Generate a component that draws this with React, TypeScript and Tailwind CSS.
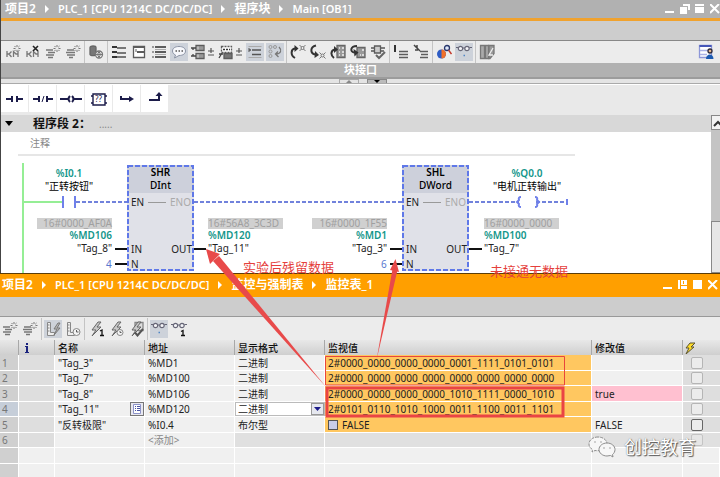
import type {ReactNode} from "react";
import clsx from "clsx";

// -------------------- data --------------------
type WatchRow = {
    name: string;
    address: string;
    format: string;
    value: string;
    modify?: string;
};

const watchRows: WatchRow[] = [
    {name: '"Tag_3"', address: "%MD1", format: "二进制", value: "2#0000_0000_0000_0000_0001_1111_0101_0101"},
    {name: '"Tag_7"', address: "%MD100", format: "二进制", value: "2#0000_0000_0000_0000_0000_0000_0000_0000"},
    {name: '"Tag_8"', address: "%MD106", format: "二进制", value: "2#0000_0000_0000_0000_1010_1111_0000_1010", modify: "true"},
    {name: '"Tag_11"', address: "%MD120", format: "二进制", value: "2#0101_0110_1010_1000_0011_1100_0011_1101"},
    {name: '"反转极限"', address: "%I0.4", format: "布尔型", value: "FALSE", modify: "FALSE"},
];

// -------------------- icons --------------------
function Icon({children}: { children: ReactNode }) {
    return (
        <svg className="w-4 h-4 shrink-0" viewBox="0 0 16 16" fill="none" stroke="#5c5c5c" strokeWidth="1.3">
            {children}
        </svg>
    );
}

const Spark = () => (
    <path d="M12 1v2M12 6v2M8.5 4.5h2M13.5 4.5h2M9.5 2l1.2 1.2M14.5 2l-1.2 1.2M9.5 7l1.2-1.2M14.5 7l-1.2-1.2" stroke="#777" strokeWidth="1"/>
);

const Network = () => (
    <path d="M2 7v6M2 10h2l2.500-2.500M4 10l2.500 3M13 7v6M13 10h-2L8.500 7.500v5.500" stroke="#777" strokeWidth="1.300"/>
);

const InsertNetworkIcon = () => <Icon><Network/><Spark/></Icon>;

const DeleteNetworkIcon = () => (
    <Icon><Network/><path d="M8 2l5 5M13 2L8 7" stroke="#222" strokeWidth="1.6"/></Icon>
);

const InsertRowIcon = () => (
    <Icon><path d="M1 6h7M3 8.500h7M1 11h8M3 13.500h5" stroke="#777" strokeWidth="1.4"/><Spark/></Icon>
);

const AddRowIcon = () => (
    <Icon><path d="M2 6h7M1 8.500h9M2 11h8M4 13.500h4" stroke="#777" strokeWidth="1.4"/><Spark/></Icon>
);

const DatabaseIcon = () => (
    <Icon>
        <path d="M2 3.500c0-2 6-2 6 0v7c0 1.500-6 1.500-6 0z" fill="#777" stroke="#666"/>
        <circle cx="11" cy="10.500" r="3.500" fill="#eee" stroke="#777"/>
        <path d="M8 10.500h6M11 7.500l1.500 3-1.500 3-1.500-3z" stroke="#777" strokeWidth="1"/>
    </Icon>
);

const OpenAllIcon = () => (
    <Icon><path d="M1 3h5M1 8h5M1 13h5" stroke="#333" strokeWidth="2"/><path d="M6 4h9M6 9h9M6 13h9" stroke="#777" strokeWidth="2"/></Icon>
);

const WindowIcon = () => (
    <Icon><path d="M2.500 2.500h11v11h-11z" fill="#fff"/><path d="M2 3h12M6 8h8" strokeWidth="2"/><path d="M5 5v3" strokeWidth="1"/></Icon>
);

const ListIcon = () => (
    <Icon>
        <path d="M4 3h11M4 8h11M4 13h11" strokeWidth="2"/>
        <path d="M1 3h2M1 8h2M1 13h2" stroke="#999" strokeWidth="2"/>
        <path d="M4 5.500h11M4 10.500h11" stroke="#aaa" strokeWidth="1"/>
    </Icon>
);

const CommentIcon = () => (
    <Icon>
        <path d="M8 2.500c4 0 6.500 1.800 6.500 4.500S12 11.500 8 11.500L3.500 14l1-3C2.500 10 1.500 8.800 1.500 7 1.500 4.300 4 2.500 8 2.500z" fill="#f6f7fb" stroke="#8b93a5" strokeWidth="1"/>
        <path d="M4.500 7h1.500M7.500 7H9M10.500 7H12" stroke="#555" strokeWidth="1.500"/>
    </Icon>
);

const OperandIcon = () => (
    <Icon>
        <path d="M6 1.500h8v5H6zM6 9.500h8v5H6z" fill="#bbb"/>
        <path d="M1 4h5M1 12h5M3 4v2M3 10v2" stroke="#444"/>
        <path d="M9 3h4M9 5h4M9 11h4M9 13h4" stroke="#777" strokeWidth="1"/>
    </Icon>
);

const TagInfoIcon = () => (
    <Icon>
        <path d="M3.500 2.500h10v6h-10z" fill="#fff" strokeDasharray="2 1"/>
        <path d="M5 5.500h7" stroke="#333" strokeWidth="1.500" strokeDasharray="2 1"/>
        <path d="M6 9.500h8v5H6z" fill="#777"/>
        <path d="M1 14l3-5M1 10h4" stroke="#444"/>
    </Icon>
);

const FavoritesIcon = () => (
    <Icon>
        <path d="M1.500 2.500h13M1.500 13.500h13" stroke="#aaa" strokeWidth="1"/>
        <path d="M2 6h2M5 6h9M5 10.500h9" stroke="#555"/>
        <path d="M2 4v4" stroke="#555" strokeWidth="1"/>
    </Icon>
);

const AbsoluteIcon = () => (
    <Icon>
        <g stroke="#999" strokeWidth="1">
            <circle cx="3.500" cy="3" r="1.500"/><circle cx="3.500" cy="7.500" r="1.500"/>
            <circle cx="3.500" cy="12" r="1.500"/><circle cx="8" cy="3" r="1.500"/>
        </g>
        <path d="M12 3c3 3 2 7-3 7M11 7.500L8.500 10l3 3" stroke="#777"/>
    </Icon>
);

const Target = ({y}: { y: number }) => (
    <g stroke="#777" strokeWidth="1">
        <circle cx="12.500" cy={y} r="1.500" fill="#eee"/>
        <path d={`M9.500 ${y - 3}l2 2M13.500 ${y + 1}l2 2M15.500 ${y - 3}l-2 2M11.500 ${y + 1}l-2 2`}/>
    </g>
);

const NextErrorIcon = () => (
    <Icon><path d="M5 14C0 11 1 5 5 4.500" stroke="#333" strokeWidth="2"/><path d="M4.500 1l4 3.500-4 3.500z" fill="#333" stroke="none"/><Target y={4}/></Icon>
);

const PrevErrorIcon = () => (
    <Icon><path d="M6 1.500C0 3 0 9 5 10.500" stroke="#333" strokeWidth="2"/><path d="M5 7l4 4-4.500 3z" fill="#333" stroke="none"/><Target y={11.5}/></Icon>
);

const UpdateCallIcon = () => (
    <Icon>
        <path d="M7 1.500h8v12H7z" fill="#999" stroke="#666"/>
        <path d="M9 4h1M12 4h2M9 8h1M12 8h2M9 11h1M12 11h2" stroke="#eee"/>
        <path d="M4 14C0 11 1 6 5 5.500" stroke="#333" strokeWidth="2"/>
        <path d="M4 2l4 3.500L4 9z" fill="#333" stroke="none"/>
    </Icon>
);

const UpdateBlockIcon = () => (
    <Icon>
        <path d="M7 3.500h8v10H7z" fill="#999" stroke="#666"/>
        <path d="M12 6h2M10 11h1M12 11h2" stroke="#eee"/>
        <path d="M7 2C0 2 0 8 4 8.500" stroke="#333" strokeWidth="2"/>
        <path d="M3.500 5l5 3.500-4 4z" fill="#333" stroke="none"/>
    </Icon>
);

const CheckIcon = () => (
    <Icon>
        <path d="M4.500 2h6v7h-6z" fill="#ccc"/><path d="M1 4h3M1 7h3M11 4h4M11 7h3" stroke="#555"/>
        <path d="M6 11l3 3 6-6" stroke="#666" strokeWidth="2"/>
    </Icon>
);

const MarkLineIcon = () => (
    <Icon><path d="M2 1v7" stroke="#333" strokeWidth="2"/><path d="M6 7.500h9M6 10.500h9M6 13.500h9" strokeWidth="1.500"/></Icon>
);

const UnmarkLineIcon = () => (
    <Icon><path d="M1 1l6 6M4 1v3M2 6h3" stroke="#444" strokeWidth="1.500"/><path d="M7 7.500h8M8 10.500h7M7 13.500h8" strokeWidth="1.500"/></Icon>
);

const SearchIcon = () => (
    <Icon>
        <circle cx="5.500" cy="10" r="4.500" fill="#2e5cc4" stroke="none"/>
        <path d="M5.500 5.500a4.500 4.500 0 0 1 0 9z" fill="#f0702a" stroke="none"/>
        <circle cx="11" cy="4" r="2.500" fill="#dfe8fa" stroke="#27366b"/>
        <path d="M12.500 6l3 4" stroke="#c23a2e" strokeWidth="1.500"/>
    </Icon>
);

const GlassesIcon = ({badge}: { badge: "dot" | "one" }) => (
    <Icon>
        <path d="M0 3.500h2M7 4h2M13.500 3.500h2.500" stroke="#667" strokeWidth="1"/>
        <circle cx="4.500" cy="4.500" r="2.200" fill="#f4f4f8" stroke="#667" strokeWidth="1.200"/>
        <circle cx="11" cy="4.500" r="2.200" fill="#f4f4f8" stroke="#667" strokeWidth="1.200"/>
        {badge === "dot"
            ? <path d="M7.500 11.500H9" stroke="#4f86c6" strokeWidth="1.500"/>
            : <path d="M10 10.500l2-1v5.500M10 14.500h4" stroke="#111"/>}
    </Icon>
);

const ModuleIcon = () => (
    <Icon>
        <path d="M1.500 1.500h4v13h-4zM6.500 1.500h3v13h-3z" fill="#aaa" stroke="#777"/>
        <path d="M10 1.500h5v8l-4 5h-1z" fill="#999" stroke="#777"/><path d="M14 4l-4 7h4" stroke="#eee"/>
    </Icon>
);

const LayoutIcon = () => (
    <Icon>
        <path d="M1.500 1.500h12v12h-12z" fill="#fff" stroke="#8d97d8"/>
        <path d="M1.500 2h12" stroke="#4657b8" strokeWidth="2"/><path d="M2 6.500h8M2 10.500h7" stroke="#aab2e4"/>
        <circle cx="12" cy="7" r="2" fill="#e6b68b" stroke="#2d2a3a"/>
        <path d="M8 15c0-6 7.500-6 7.500 0z" fill="#1d5bb0" stroke="none"/>
    </Icon>
);

const Bolt = () => <path d="M10 1L4 9h4l-4 6 9-9H9l4-5z" fill="#c9c9c9" stroke="#666" strokeWidth="1"/>;

const RulerIcon = ({clock}: { clock?: boolean }) => (
    <Icon>
        <path d="M2.500 1.500h3v10h4v3h-7z" fill="#eee" stroke="#888" strokeWidth="1"/>
        <path d="M3 4h1.500M3 7h1.500M3 10h1.500" stroke="#888" strokeWidth="1"/>
        {clock
            ? <><circle cx="11.500" cy="11" r="3.500" fill="#f4f4f4" stroke="#888" strokeWidth="1"/><path d="M11.500 9v2h2" strokeWidth="1"/></>
            : <path d="M13 2l-4 6h3l-3 6 6-7h-3l3-5z" fill="#bbb" stroke="#777" strokeWidth="1"/>}
    </Icon>
);

const BoltOneIcon = () => <Icon><Bolt/><path d="M12 10l2-1v5.500M12 14.500h4" stroke="#111"/></Icon>;

const BoltClockIcon = () => (
    <Icon><Bolt/><circle cx="12" cy="11.500" r="3" fill="#f4f4f4" stroke="#888" strokeWidth="1"/><path d="M12 10v1.500h1.500" strokeWidth="1"/></Icon>
);

const BoltCheckIcon = () => (
    <Icon><path d="M7 1.500h8v8H7z" fill="#ddd" stroke="#888"/><Bolt/><path d="M7 11.500l2.500 3L15 8" stroke="#555" strokeWidth="2"/></Icon>
);

// -------------------- toolbar parts --------------------
function Tool({label, active, children}: { label: string; active?: boolean; children: ReactNode }) {
    return (
        <button
            aria-label={label}
            className={clsx("mx-px flex h-[18px] w-[18px] items-center justify-center", active && "bg-[#cdd2da]")}
        >
            {children}
        </button>
    );
}

function SplitTool({label, children}: { label: string; children: ReactNode }) {
    return (
        <button aria-label={label} className="flex h-[18px] w-7 items-center justify-between pr-0.5 pl-px">
            {children}
            <svg className="h-2 w-2" viewBox="0 0 8 8" stroke="#555" strokeWidth="1.2">
                <path d="M1 3h6M4 0v5M1 7h6"/>
            </svg>
        </button>
    );
}

const Divider = () => <span className="mx-px h-[22px] w-px bg-[#c4c4c4]"/>;

function Crumbs({items}: { items: string[] }) {
    return (
        <nav className="flex items-center gap-[9px] whitespace-nowrap font-semibold text-white">
            {items.map((item, i) => (
                <span key={item} className="flex items-center gap-[9px]">
                    {i > 0 && <svg className="h-2 w-1" viewBox="0 0 4 8"><path d="M0 0l4 4-4 4z" fill="#fff"/></svg>}
                    <a href="#" className={clsx("leading-4", /^[A-Z]/.test(item) ? "text-[11px]" : "text-xs")}>{item}</a>
                </span>
            ))}
        </nav>
    );
}

function WindowButtons({maximized}: { maximized?: boolean }) {
    return (
        <div className="flex items-center gap-[5px]">
            <button aria-label="最小化">
                <svg className="h-[10px] w-[10px]" viewBox="0 0 10 10"><path d="M0 7h9v2H0z" fill="#fff"/></svg>
            </button>
            <button aria-label="还原">
                <svg className="h-[10px] w-[10px]" viewBox="0 0 10 10" fill="#fff">
                    {maximized
                        ? <path d="M0 0h2v9H0zM3 0h6v5H3zM3 6h6v3H3zM5 1v3h1V1z" fillRule="evenodd"/>
                        : <path d="M3 0h7v6H8V2H3zM0 3h7v7H0z"/>}
                </svg>
            </button>
            <button aria-label="最大化">
                <svg className="h-[10px] w-[10px]" viewBox="0 0 10 10" fill="#fff">
                    {maximized ? <path d="M0 0h9v9H0z"/> : <path d="M0 0h9v2H0zM0 3h9v6H0z"/>}
                </svg>
            </button>
            <button aria-label="关闭">
                <svg className="h-[10px] w-[10px]" viewBox="0 0 10 10"><path d="M0 0l9 9M9 0L0 9" stroke="#fff" strokeWidth="2"/></svg>
            </button>
        </div>
    );
}

// -------------------- ladder palette --------------------
const paletteItems: { label: string; art: ReactNode }[] = [
    {label: "常开触点", art: <path d="M3 8h6M9 5v6M14 5v6M14 8h6"/>},
    {label: "常闭触点", art: <><path d="M2 8h6M8 5v6M16 5v6M16 8h6"/><path d="M11 11l2-6" strokeWidth="1"/></>},
    {label: "线圈", art: <path d="M1 8h8M11 5Q8 8 11 11M13 5q3 3 0 6M15 8h8"/>},
    {label: "空功能框", art: <path d="M6 3h12v11H6zM4 5h2M4 12h2M18 5h2M18 12h2" strokeWidth="1.4"/>},
    {label: "打开分支", art: <><path d="M6 5v3h9"/><path d="M14 5l5 3-5 3z" fill="#1c1c4a" stroke="none"/></>},
    {label: "嵌套闭合", art: <><path d="M6 9h10V5"/><path d="M12.500 5L16 1l3.500 4z" fill="#1c1c4a" stroke="none"/></>},
];

function Palette() {
    return (
        <div className="flex h-[30px] items-start gap-px bg-[#e9e9e9]">
            {paletteItems.map((item, i) => (
                <button key={item.label} aria-label={item.label} className="relative flex h-[27px] w-[27px] items-center justify-center bg-white">
                    <svg className="h-4 w-6" viewBox="0 0 24 16" fill="none" stroke="#1c1c4a" strokeWidth="2">{item.art}</svg>
                    {i === 3 && <span className="absolute inset-0 text-center text-[8px] leading-[27px] text-[#1c1c4a]">??</span>}
                </button>
            ))}
        </div>
    );
}

// -------------------- ladder diagram --------------------
function Block({name, type, className}: { name: string; type: string; className: string }) {
    return (
        <div className={clsx("absolute top-[33px] h-[106px] w-[67px] bg-[#e0e1e8] text-[10px] leading-[13px] text-[#222]", className)}>
            <div className="h-7 bg-[#cdd0db] pt-px text-center font-medium text-black">
                <div className="font-semibold">{name}</div>
                <div>{type}</div>
            </div>
            <div className="flex items-center justify-between pt-[3px] pr-[3px] pl-1">
                <span>EN</span>
                <span className="h-px w-[18px] bg-[#999]"/>
                <span className="text-[#aaa]">ENO</span>
            </div>
            <div className="flex justify-between pt-[34px] pr-0.5 pl-1">
                <span>IN</span>
                <span>OUT</span>
            </div>
            <div className="pt-0.5 pl-1">N</div>
            <svg className="absolute inset-0 h-full w-full" fill="none">
                <rect x="1" y="1" width="65" height="104" stroke="#5f78e8" strokeWidth="2" strokeDasharray="5 2"/>
            </svg>
        </div>
    );
}

function Operand({live, address, tag, right, className}: {
    live: string;
    address: string;
    tag: string;
    right?: boolean;
    className: string;
}) {
    return (
        <div className={clsx("absolute top-[86px] w-[75px] text-[10px] leading-[13px] whitespace-nowrap text-[#222]", right && "text-right", className)}>
            <div className="h-[11px] bg-[#d0d0d0] leading-[11px] text-[#a0a0a0]">{live}</div>
            <div className="font-semibold text-[#12968a]">{address}</div>
            <div>{tag}</div>
        </div>
    );
}

function BitOperand({address, tag, className}: { address: string; tag: string; className: string }) {
    return (
        <div className={clsx("absolute top-[35px] w-20 text-center text-[10px] leading-[13px] whitespace-nowrap text-black", className)}>
            <div className="font-semibold text-[#12968a]">{address}</div>
            <div>{tag}</div>
        </div>
    );
}

function Ladder() {
    return (
        <div className="relative flex-1 overflow-hidden bg-white">
            <div className="ml-[17px] h-6 w-[557px] border-b-2 border-[#e6e6e6] pl-3 text-[10px] leading-[22px] text-[#888]">注释</div>
            <svg className="absolute inset-0 h-full w-full" fill="none">
                <path d="M22 31v110M22 70h40" stroke="#95ee95" strokeWidth="2"/>
                <path d="M62 64v12M74 64v12" stroke="#6f80ea" strokeWidth="2"/>
                <path d="M75 70h51M193 70h208M468 70h50M535 70h31" stroke="#7182dc" strokeWidth="2" strokeDasharray="4 2"/>
                <path d="M520 65q-3 0-2 3l-2 2 2 2q-1 3 2 3M534 65q3 0 2 3l2 2-2 2q1 3-2 3M566 67v6" stroke="#6f80ea" strokeWidth="2"/>
                <path d="M114 117h12M114 132h12M193 117h12M389 117h12M389 132h12M468 117h13" stroke="#111" strokeWidth="2"/>
            </svg>
            <BitOperand address="%I0.1" tag='"正转按钮"' className="left-7"/>
            <Operand live="16#0000_AF0A" address="%MD106" tag='"Tag_8"' right className="left-9"/>
            <span className="absolute top-[126px] left-[105px] text-[10px] leading-3 text-[#5a78d0]">4</span>
            <Block name="SHR" type="DInt" className="left-[126px]"/>
            <Operand live="16#56A8_3C3D" address="%MD120" tag='"Tag_11"' className="left-[207px]"/>
            <Operand live="16#0000_1F55" address="%MD1" tag='"Tag_3"' right className="left-[311px]"/>
            <span className="absolute top-[126px] left-[380px] text-[10px] leading-3 text-[#5a78d0]">6</span>
            <Block name="SHL" type="DWord" className="left-[401px]"/>
            <BitOperand address="%Q0.0" tag='"电机正转输出"' className="left-[486px]"/>
            <Operand live="16#0000_0000" address="%MD100" tag='"Tag_7"' className="left-[483px]"/>
        </div>
    );
}

function ScrollBar() {
    return (
        <div className="flex w-[9px] flex-col overflow-hidden bg-[#c4c4c4]">
            <button aria-label="向上滚动" className="h-[15px] w-[17px] border border-[#888] bg-[#f3f3f3]">
                <svg className="h-3 w-3" viewBox="0 0 12 12" fill="none" stroke="#333" strokeWidth="2"><path d="M2 9l4-4 4 4"/></svg>
            </button>
            <div className="mt-[91px] w-[17px] flex-1 border border-[#888] bg-[#e6e6e6]"/>
        </div>
    );
}

// -------------------- program editor --------------------
function ProgramEditor() {
    return (
        <section className="flex h-[273px] flex-col border-l border-[#444]">
            <header className="flex h-[21px] items-center justify-between border-b-[3px] border-[#f0a22e] bg-[#b1b1b1] pb-px pl-1">
                <Crumbs items={["项目2", "PLC_1 [CPU 1214C DC/DC/DC]", "程序块", "Main [OB1]"]}/>
                <WindowButtons/>
            </header>
            <div className="h-5 border-b border-[#888] bg-[#cdcdcd]"/>
            <div className="flex h-[22px] items-center bg-[#ececec] pl-0.5">
                <Tool label="插入程序段"><InsertNetworkIcon/></Tool>
                <Tool label="删除程序段"><DeleteNetworkIcon/></Tool>
                <Tool label="插入行"><InsertRowIcon/></Tool>
                <Tool label="添加行"><AddRowIcon/></Tool>
                <Divider/>
                <Tool label="复位启动值"><DatabaseIcon/></Tool>
                <Divider/>
                <Tool label="打开所有程序段"><OpenAllIcon/></Tool>
                <Tool label="关闭所有程序段"><WindowIcon/></Tool>
                <Tool label="自由格式"><ListIcon/></Tool>
                <Tool label="注释" active><CommentIcon/></Tool>
                <SplitTool label="操作数"><OperandIcon/></SplitTool>
                <SplitTool label="变量信息"><TagInfoIcon/></SplitTool>
                <Tool label="收藏夹" active><FavoritesIcon/></Tool>
                <Tool label="绝对操作数" active><AbsoluteIcon/></Tool>
                <Divider/>
                <Tool label="下一个错误"><NextErrorIcon/></Tool>
                <Tool label="上一个错误"><PrevErrorIcon/></Tool>
                <Tool label="更新调用"><UpdateCallIcon/></Tool>
                <Tool label="更新块"><UpdateBlockIcon/></Tool>
                <Tool label="一致性检查"><CheckIcon/></Tool>
                <Divider/>
                <Tool label="标记行"><MarkLineIcon/></Tool>
                <Tool label="取消标记"><UnmarkLineIcon/></Tool>
                <Divider/>
                <Tool label="查找"><SearchIcon/></Tool>
                <Tool label="监视" active><GlassesIcon badge="dot"/></Tool>
                <Divider/>
                <Tool label="模块"><ModuleIcon/></Tool>
                <span className="flex-1"/>
                <Tool label="布局"><LayoutIcon/></Tool>
                <span className="w-1"/>
            </div>
            <div className="h-4 border-b-2 border-[#9c9c9c] bg-[#b1b1b1] text-center text-[11px] leading-[14px] font-bold text-white">块接口</div>
            <div className="flex h-[5px] justify-center gap-2 border-b border-[#aaa] bg-[#e4e4e4] pl-1">
                <button aria-label="向上" className="flex w-5 justify-center border border-b-0 border-[#aaa]">
                    <svg className="h-[3px] w-1.5" viewBox="0 0 6 3"><path d="M0 3l3-3 3 3z" fill="#888"/></svg>
                </button>
                <button aria-label="向下" className="flex w-5 justify-center border border-b-0 border-[#888] bg-[#bbb]">
                    <svg className="h-[3px] w-1.5" viewBox="0 0 6 3"><path d="M0 0h6L3 3z" fill="#000"/></svg>
                </button>
            </div>
            <div className="h-px bg-white"/>
            <Palette/>
            <div className="flex flex-1 overflow-hidden">
                <div className="flex flex-1 flex-col">
                    <div className="flex h-[17px] items-center bg-[#d8d8d8] pl-1">
                        <button aria-label="折叠程序段">
                            <svg className="h-[5px] w-2" viewBox="0 0 8 5"><path d="M0 0h8L4 5z" fill="#000"/></svg>
                        </button>
                        <h2 className="ml-5 text-xs leading-4 font-bold text-[#111]">程序段 2：</h2>
                        <span className="ml-2 text-[10px] leading-4 text-[#888]">.....</span>
                    </div>
                    <Ladder/>
                </div>
                <ScrollBar/>
            </div>
        </section>
    );
}

// -------------------- watch table --------------------
const headCell = "border-r border-[#a8a8a8] pl-[3px] text-left font-medium text-[#111]";
const bodyCell = "border-r border-b border-white pl-[3px]";

function WatchTable() {
    return (
        <table className="w-full table-fixed border-separate border-spacing-0 text-[10px] leading-3 whitespace-nowrap text-[#222]">
            <colgroup>
                <col className="w-[19px]"/>
                <col className="w-9"/>
                <col className="w-[90px]"/>
                <col className="w-[90px]"/>
                <col className="w-[90px]"/>
                <col/>
                <col className="w-[91px]"/>
                <col className="w-[37px]"/>
            </colgroup>
            <thead>
                <tr className="h-[15px] bg-linear-to-b from-[#e8e8e8] to-[#cfcfcf]">
                    <th className={headCell} aria-label="行"/>
                    <th className={headCell}>
                        <svg className="ml-0.5 h-[10px] w-1.5" viewBox="0 0 6 10" fill="#1a237e"><path d="M2 0h2v2H2zM1 3h3v6h1v1H1V9h1V4H1z"/></svg>
                    </th>
                    <th className={headCell}>名称</th>
                    <th className={headCell}>地址</th>
                    <th className={headCell}>显示格式</th>
                    <th className={headCell}>监视值</th>
                    <th className={headCell}>修改值</th>
                    <th className="pl-0.5" aria-label="修改">
                        <svg className="h-3 w-3" viewBox="0 0 12 12"><path d="M5 1L1 6h3l-3 6 8-7H6l4-4z" fill="#ffdc28" stroke="#5c5530"/></svg>
                    </th>
                </tr>
            </thead>
            <tbody>
                {watchRows.map((row, i) => (
                    <tr key={row.name} className={clsx("bg-[#f0f0f0]", i % 2 ? "h-[15px]" : "h-4")}>
                        <td className={clsx("border-r border-b border-white pl-0.5 text-[#777]", i === 3 ? "bg-[#c6ced9]" : "bg-[#d0d0d0]")}>{i + 1}</td>
                        <td className={clsx(bodyCell, "bg-[#dedede]")}/>
                        <td className={bodyCell}>
                            <div className="flex items-center justify-between">
                                {row.name}
                                {i === 3 && (
                                    <button aria-label="选择变量" className="flex h-[14px] w-[14px] items-center justify-center border border-[#777] bg-[#e8e8f0]">
                                        <svg className="h-2.5 w-2.5 shrink-0" viewBox="0 0 10 10" fill="none" stroke="#4a55a5">
                                            <path d="M1.500 .5h7v9h-7z" fill="#fff" stroke="#8c93c8"/><path d="M3 2.500h1M5 2.500h3M3 4.500h1M5 4.500h3M3 6.500h1M5 6.500h3"/>
                                        </svg>
                                    </button>
                                )}
                            </div>
                        </td>
                        <td className={bodyCell}>{row.address}</td>
                        {i === 3 ? (
                            <td className="border-b border-white bg-white">
                                <div className="relative flex h-[14px] border border-[#bbb]">
                                    <select aria-label="显示格式" defaultValue={row.format} className="w-full appearance-none bg-white pl-0.5 leading-3">
                                        <option>二进制</option>
                                        <option>十六进制</option>
                                    </select>
                                    <span className="pointer-events-none absolute inset-y-0 right-0 flex w-[13px] items-center justify-center border border-[#999] bg-[#e6e8ef]">
                                        <svg className="h-1 w-[7px]" viewBox="0 0 7 4"><path d="M0 0h7L3.500 4z" fill="#1c1c8a"/></svg>
                                    </span>
                                </div>
                            </td>
                        ) : (
                            <td className={bodyCell}>{row.format}</td>
                        )}
                        <td className={clsx(bodyCell, "bg-[#ffc760]")}>
                            <div className="flex items-center gap-1">
                                {i === 4 && <input type="checkbox" aria-label={`${row.name} 监视值`} className="h-[10px] w-[10px] appearance-none border border-[#555] bg-[#c9cdea]"/>}
                                {row.value}
                            </div>
                        </td>
                        <td className={clsx(bodyCell, i === 2 && "bg-[#ffc0d0]")}>{row.modify}</td>
                        <td className="border-b border-white bg-[#dedede] pl-2">
                            <input
                                type="checkbox"
                                aria-label={`修改 ${row.name}`}
                                className={clsx("block h-3 w-3 appearance-none rounded-xs border bg-[#ececec]", i === 4 ? "border-[#666]" : "border-[#b5b5b5]")}
                            />
                        </td>
                    </tr>
                ))}
                <tr className="h-[15px] bg-[#e0e0e0]">
                    <td className="border-r border-b border-white bg-[#d0d0d0] pl-0.5 text-[#777]">6</td>
                    <td className={clsx(bodyCell, "bg-[#dedede]")}/>
                    <td className={clsx(bodyCell, "bg-[#f0f0f0]")}/>
                    <td className={clsx(bodyCell, "bg-[#f0f0f0] text-[#888]")}>&lt;添加&gt;</td>
                    <td className={bodyCell}/>
                    <td className={bodyCell}/>
                    <td className={bodyCell}/>
                    <td className="border-b border-white pl-2">
                        <input type="checkbox" aria-label="修改新行" disabled className="block h-3 w-3 appearance-none rounded-xs border border-[#c4c4c4] bg-[#e6e6e6]"/>
                    </td>
                </tr>
                {[7, 8].map((n) => (
                    <tr key={n} className="h-4 bg-[#f0f0f0]">
                        <td className="border-r border-b border-white bg-[#d0d0d0]"/>
                        {[1, 2, 3, 4, 5, 6, 7].map((c) => <td key={c} className={bodyCell}/>)}
                    </tr>
                ))}
            </tbody>
        </table>
    );
}

function WatchEditor() {
    return (
        <section className="flex-1 overflow-hidden border-t border-[#5a3c08]">
            <header className="flex h-[23px] items-center justify-between bg-[#ff9f00] pr-0.5 pb-0.5 pl-0.5">
                <Crumbs items={["项目2", "PLC_1 [CPU 1214C DC/DC/DC]", "监控与强制表", "监控表_1"]}/>
                <WindowButtons maximized/>
            </header>
            <div className="h-5 border-b border-[#999] bg-[#cdcdcd]"/>
            <div className="flex h-[23px] items-center bg-[#ececec]">
                <Tool label="插入行"><InsertRowIcon/></Tool>
                <Tool label="添加行"><AddRowIcon/></Tool>
                <Divider/>
                <Tool label="显示所有修改列" active><RulerIcon/></Tool>
                <Tool label="显示扩展模式列"><RulerIcon clock/></Tool>
                <Divider/>
                <Tool label="立即修改一次"><BoltOneIcon/></Tool>
                <Tool label="触发修改"><BoltClockIcon/></Tool>
                <Tool label="启用外设输出"><BoltCheckIcon/></Tool>
                <Divider/>
                <Tool label="全部监视" active><GlassesIcon badge="dot"/></Tool>
                <Tool label="监视一次"><GlassesIcon badge="one"/></Tool>
            </div>
            <WatchTable/>
        </section>
    );
}

// -------------------- notes drawn over both editors --------------------
function Annotations() {
    return (
        <div className="pointer-events-none absolute inset-0">
            <svg className="absolute inset-0 h-full w-full" fill="none">
                <path d="M325.500 356.500h239v28.500h-239z" stroke="#e8463c"/>
                <path d="M327 388h236v28H327z" stroke="#ea4444" strokeWidth="3"/>
                <path d="M326 387L219 256l-6 5z" fill="#e84a4a"/>
                <path d="M206 249l14 5-10 10z" fill="#e84a4a"/>
                <path d="M376.500 360l21-90-5-1z" fill="#e84a4a"/>
                <path d="M395.500 259l3.500 13-9-2z" fill="#e84a4a"/>
            </svg>
            <p className="absolute top-[258px] left-[243px] text-[13px] leading-[18px] text-[#e5403c]">实验后残留数据</p>
            <p className="absolute top-[262px] left-[490px] text-[13px] leading-[18px] text-[#e5403c]">未接通无数据</p>
        </div>
    );
}

function Watermark() {
    return (
        <div className="pointer-events-none absolute right-6 bottom-[18px] flex items-center gap-2">
            <svg className="h-[22px] w-7" viewBox="0 0 28 22" fill="#f7f7f7" stroke="#8c8c8c">
                <path d="M10 1C5 1 1 4 1 8c0 2.500 1.500 4.500 3.500 5.500L4 16l3-1.500c5 1 12-1 12-6.500 0-4-4-7-9-7z" strokeDasharray="3 1"/>
                <path d="M19 7c-4.500 0-8 3-8 6.500s3.500 6.500 8 6.500l3.500-.5 2.500 1.500-.5-2.500c1.500-1 2.500-3 2.500-5C27 10 23.500 7 19 7z"/>
                <path d="M7 5.500v1M13 5.500v1M16 11.500v1M22 11.500v1" strokeWidth="1.500"/>
            </svg>
            <span className="text-lg leading-6 text-white [text-shadow:1px_1px_1px_#555,0_0_1px_#777]">创控教育</span>
        </div>
    );
}

export default function App() {
    return (
        <main className="relative flex h-screen flex-col overflow-hidden bg-[#f0f0f0] font-['Noto_Sans','Noto_Sans_CJK_SC',sans-serif]">
            <ProgramEditor/>
            <WatchEditor/>
            <Annotations/>
            <Watermark/>
        </main>
    );
}
